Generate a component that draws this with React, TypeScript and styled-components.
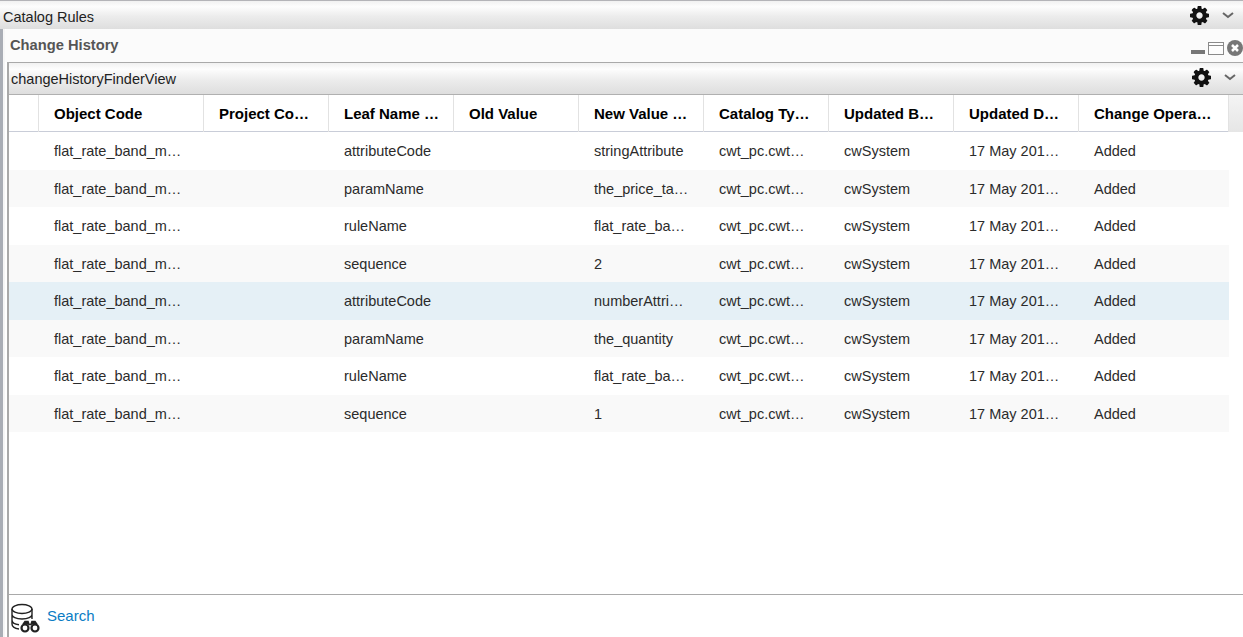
import styled, { createGlobalStyle } from "styled-components"

const GlobalStyle = createGlobalStyle`
  html, body {
    margin: 0;
    padding: 0;
    background: #fff;
    overflow: hidden;
  }
  body {
    font-family: "Liberation Sans", Arial, sans-serif;
  }
`

const Page = styled.div`
  width: 1243px;
  height: 637px;
  display: flex;
  flex-direction: column;
  overflow: hidden;
`

const TopBar = styled.div`
  height: 29px;
  flex: none;
  box-sizing: border-box;
  display: flex;
  align-items: center;
  justify-content: space-between;
  padding: 3px 9px 0 3px;
  font-size: 14.5px;
  color: #222;
  border-top: 1px solid #b4b4b8;
  background: linear-gradient(#f1f1f1 0%, #fdfdfd 20%, #ececec 55%, #dedede 100%);
`

const Tools = styled.div`
  display: flex;
  align-items: center;
  gap: 13px;
  margin-top: -2px;
`

const Body = styled.div`
  flex: 1;
  min-height: 0;
  display: flex;
  border-left: 3px solid #a9adb5;
`

const Gutter = styled.div`
  width: 2px;
  flex: none;
  background: #f6f6f6;
`

const Dialog = styled.div`
  flex: 1;
  min-width: 0;
  display: flex;
  flex-direction: column;
`

const DialogHead = styled.div`
  height: 33px;
  flex: none;
  box-sizing: border-box;
  display: flex;
  justify-content: space-between;
  padding: 8px 0 0 5px;
  background: #fbfbfb;
  border-radius: 3px 0 0 0;
`

const DialogTitle = styled.span`
  font-size: 14.7px;
  font-weight: bold;
  color: #555;
`

const WindowButtons = styled.svg`
  margin-top: 3px;
  width: 52px;
  height: 18px;
  flex: none;
`

const Panel = styled.div`
  flex: 1;
  min-height: 0;
  display: flex;
  flex-direction: column;
  margin-left: 2px;
  border-left: 2px solid #a9a9a9;
`

const PanelBar = styled.div`
  height: 33px;
  flex: none;
  box-sizing: border-box;
  display: flex;
  align-items: center;
  justify-content: space-between;
  padding: 0 7px 0 2px;
  font-size: 14.5px;
  color: #222;
  border-top: 1px solid #a9a9a9;
  border-bottom: 1px solid #b0b0b0;
  background: linear-gradient(#f1f1f1 0%, #fdfdfd 20%, #ececec 55%, #dedede 100%);
`

const GridWrap = styled.div`
  height: 500px;
  flex: none;
  box-sizing: border-box;
  border-bottom: 1px solid #a9a9a9;
  background: #fff;
`

const columns = "30px 165px repeat(7, 125px) 150px"

const HeaderRow = styled.div`
  display: grid;
  grid-template-columns: ${columns} 1fr;
  height: 37px;
  box-sizing: border-box;
  border-bottom: 1px solid #c9cdd8;
`

const HeaderCell = styled.div`
  padding-left: 15px;
  border-right: 1px solid #e2e2e2;
  line-height: 37px;
  font-size: 15px;
  font-weight: bold;
  color: #000;
  white-space: nowrap;
`

const HeaderFiller = styled.div`
  background: linear-gradient(#f4f4f4, #e6e6e6);
`

const Row = styled.div<{ $stripe: boolean; $selected: boolean }>`
  display: grid;
  grid-template-columns: ${columns};
  width: 1220px;
  height: 37.5px;
  background: ${(p) => (p.$selected ? "#e5f0f6" : p.$stripe ? "#f9f9f9" : "#fff")};
`

const Cell = styled.div`
  padding-left: 15px;
  line-height: 38.5px;
  font-size: 14.5px;
  color: #2b2b2b;
  white-space: nowrap;
`

const Footer = styled.div`
  flex: 1;
  display: flex;
  align-items: center;
  gap: 7px;
  padding: 0 0 2px 1px;
`

const FooterIcon = styled.svg`
  flex: none;
  margin-top: 6px;
`

const SearchLink = styled.a`
  font-size: 15px;
  color: #0a7cc4;
`

const headers = [
  "",
  "Object Code",
  "Project Co…",
  "Leaf Name …",
  "Old Value",
  "New Value …",
  "Catalog Ty…",
  "Updated B…",
  "Updated D…",
  "Change Opera…",
]

const rows = [
  ["attributeCode", "stringAttribute"],
  ["paramName", "the_price_ta…"],
  ["ruleName", "flat_rate_ba…"],
  ["sequence", "2"],
  ["attributeCode", "numberAttri…"],
  ["paramName", "the_quantity"],
  ["ruleName", "flat_rate_ba…"],
  ["sequence", "1"],
]

const Gear = () => (
  <svg width="19" height="19" viewBox="128 128 1536 1536" fill="#111">
    <path d="M1152 896q0-106-75-181t-181-75-181 75-75 181 75 181 181 75 181-75 75-181zm512-109v222q0 12-8 23t-20 13l-185 28q-19 54-39 91 35 50 107 138 10 12 10 25t-9 23q-27 37-99 108t-94 71q-12 0-26-9l-138-108q-44 23-91 38-16 136-29 186-7 28-36 28h-222q-14 0-24.500-8.500t-11.500-21.500l-28-184q-49-16-90-37l-141 107q-10 9-25 9-14 0-25-11-126-114-165-168-7-10-7-23 0-12 8-23 15-21 51-66.500t54-70.500q-27-50-41-99l-183-27q-13-2-21-12.500t-8-23.500v-222q0-12 8-23t19-13l186-28q14-46 39-92-40-57-107-138-10-12-10-24 0-10 9-23 26-36 98.500-107.500t94.500-71.500q13 0 26 10l138 107q44-23 91-38 16-136 29-186 7-28 36-28h222q14 0 24.500 8.500t11.500 21.500l28 184q49 16 90 37l142-107q9-9 24-9 13 0 25 10 129 119 165 170 7 8 7 22 0 12-8 23-15 21-51 66.500t-54 70.500q26 50 41 98l183 28q13 2 21 12.500t8 23.500z" />
  </svg>
)

const Chevron = () => (
  <svg width="12" height="7" viewBox="0 0 12 7" fill="none" stroke="#666" strokeWidth="2">
    <path d="M1 1l5 4 5-4" />
  </svg>
)

const App = () => {
  return (
    <Page>
      <GlobalStyle />
      <TopBar>
        <span>Catalog Rules</span>
        <Tools>
          <Gear />
          <Chevron />
        </Tools>
      </TopBar>
      <Body>
        <Gutter />
        <Dialog>
          <DialogHead>
            <DialogTitle>Change History</DialogTitle>
            <WindowButtons viewBox="0 0 52 18">
              <rect x="0" y="10" width="14" height="4" fill="#777" />
              <rect x="17.5" y="2.5" width="15" height="12" fill="#fdfdfd" stroke="#8a8a8a" />
              <line x1="18" y1="5.500" x2="32" y2="5.500" stroke="#8a8a8a" />
              <circle cx="44" cy="8" r="8" fill="#777" />
              <path d="M41 5l6 6M47 5l-6 6" stroke="#fff" strokeWidth="2.500" />
            </WindowButtons>
          </DialogHead>
          <Panel>
            <PanelBar>
              <span>changeHistoryFinderView</span>
              <Tools>
                <Gear />
                <Chevron />
              </Tools>
            </PanelBar>
            <GridWrap>
              <HeaderRow>
                {headers.map((h, i) => (
                  <HeaderCell key={i}>{h}</HeaderCell>
                ))}
                <HeaderFiller />
              </HeaderRow>
              {rows.map(([leaf, value], i) => (
                <Row key={i} $stripe={i % 2 === 1} $selected={i === 4}>
                  <Cell />
                  <Cell>flat_rate_band_m…</Cell>
                  <Cell />
                  <Cell>{leaf}</Cell>
                  <Cell />
                  <Cell>{value}</Cell>
                  <Cell>cwt_pc.cwt…</Cell>
                  <Cell>cwSystem</Cell>
                  <Cell>17 May 201…</Cell>
                  <Cell>Added</Cell>
                </Row>
              ))}
            </GridWrap>
            <Footer>
              <FooterIcon width="30" height="30" viewBox="0 0 30 30" fill="none" stroke="#222" strokeWidth="1.400">
                <ellipse cx="12" cy="6" rx="10" ry="4.500" />
                <path d="M2 6V21c0 2.500 3 4.500 7 5M22 6V16M2 11.500c0 2.500 4 4.500 10 4.500s10-2 10-4.500M2 17c0 2.500 3 4.300 7 4.700" />
                <circle cx="15" cy="25" r="3.500" strokeWidth="2.200" />
                <circle cx="25" cy="25" r="3.500" strokeWidth="2.200" />
                <path d="M13 21.500l2-3h3l1 3h2l1-3h3l2 3" fill="#222" strokeWidth="1.600" />
              </FooterIcon>
              <SearchLink>Search</SearchLink>
            </Footer>
          </Panel>
        </Dialog>
      </Body>
    </Page>
  )
}

export default App
